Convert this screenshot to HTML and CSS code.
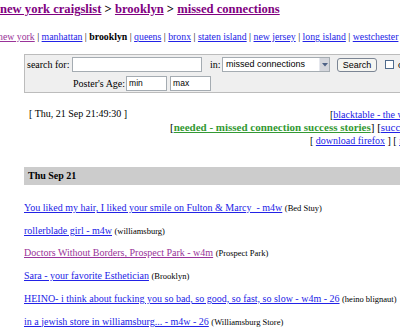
FILE: index.html
```html
<!DOCTYPE html>
<html>
  <head>
    <meta charset="utf-8">
    <title>missed connections</title>
    <link rel="stylesheet" href="styles.css">
  </head>
  <body>
    <h1 class="crumbs">
      <a href="#">new york craigslist</a> &gt; <a href="#">brooklyn</a> &gt; <a href="#">missed connections</a>
    </h1>

    <div class="nav">
      <a href="#" class="seen">new york</a> |
      <a href="#">manhattan</a> |
      <b>brooklyn</b> |
      <a href="#">queens</a> |
      <a href="#">bronx</a> |
      <a href="#">staten island</a> |
      <a href="#">new jersey</a> |
      <a href="#">long island</a> |
      <a href="#">westchester</a> |
      <a href="#">fairfield</a>
    </div>

    <form class="search">
      <div class="row">
        <span class="lbl">search for:</span>
        <span class="field wide"></span>
        <span class="in">in:</span>
        <span class="select">
          <span class="sel-text">missed connections</span>
          <span class="sel-btn">
            <svg width="6" height="4" viewBox="0 0 6 4"><path d="M0 0 L3 3.5 L6 0 Z" fill="#4d6185"/></svg>
          </span>
        </span>
        <span class="btn">Search</span>
        <span class="check"></span>
        <span class="only">only search titles</span>
      </div>
      <div class="row second">
        <span class="age">Poster's Age:</span>
        <span class="field small">min</span>
        <span class="field small">max</span>
      </div>
    </form>

    <div class="info">
      <div class="date">[ Thu, 21 Sep 21:49:30 ]</div>
      <div class="side">
        <div class="l1">[<a href="#">blacktable - the worst of craigslist</a>]</div>
        <div class="l2">[<a href="#" class="green">needed - missed connection success stories</a>] [<a href="#">success stories</a>]</div>
        <div class="l3">[ <a href="#">download firefox</a> ] [ <a href="#">rss</a> ]</div>
      </div>
    </div>

    <div class="day">Thu Sep 21</div>

    <div class="list">
      <p><a href="#">You liked my hair, I liked your smile on Fulton &amp; Marcy &nbsp;- m4w</a> <small>(Bed Stuy)</small></p>
      <p><a href="#">rollerblade girl - m4w</a> <small>(williamsburg)</small></p>
      <p><a href="#" class="seen">Doctors Without Borders, Prospect Park - w4m</a> <small>(Prospect Park)</small></p>
      <p><a href="#">Sara - your favorite Esthetician</a> <small>(Brooklyn)</small></p>
      <p><a href="#">HEINO- i think about fucking you so bad, so good, so fast, so slow - w4m - 26</a> <small>(heino blignaut)</small></p>
      <p><a href="#">in a jewish store in williamsburg... - m4w - 26</a> <small>(Williamsburg Store)</small></p>
    </div>
  </body>
</html>
```

FILE: styles.css
```css
html, body {
  overflow: hidden;
}
body {
  margin: 0;
  font-family: "Liberation Serif", "Times New Roman", serif;
  font-size: 10px;
  color: #000;
  background-color: #fff;
}
a {
  color: #2222e6;
}
a.seen {
  color: #993399;
}

.crumbs {
  font-size: 12.6px;
  line-height: 15px;
  margin: 2px 0 0 0;
  white-space: nowrap;
}
.crumbs a {
  color: #800080;
}

.nav {
  font-size: 9.8px;
  line-height: 12px;
  margin: 14px 0 0 -2px;
  white-space: nowrap;
}

.search {
  margin: 11px 0 0 24px;
  width: 520px;
  border: 1px solid #bcbcbc;
  background-color: #efefef;
  padding: 2px 3px 1px 2px;
}
.search .row {
  display: flex;
  align-items: center;
  height: 15px;
  white-space: nowrap;
}
.search .second {
  margin-top: 4px;
  padding-left: 46px;
}
.lbl {
  width: 45px;
}
.field {
  box-sizing: border-box;
  height: 15px;
  border: 1px solid #a5acb2;
  background-color: #fff;
  font-family: "Liberation Sans", Arial, sans-serif;
  font-size: 8.5px;
  line-height: 13px;
  padding-left: 2px;
}
.wide {
  width: 130px;
}
.small {
  width: 41px;
  margin-right: 3px;
}
.age {
  margin-right: 1px;
}
.in {
  margin-left: 8px;
  width: 12px;
}
.select {
  box-sizing: border-box;
  display: flex;
  width: 108px;
  height: 15px;
  border: 1px solid #a5acb2;
  background-color: #fff;
  font-family: "Liberation Sans", Arial, sans-serif;
  font-size: 9px;
}
.sel-text {
  flex: 1;
  line-height: 13px;
  padding-left: 3px;
}
.sel-btn {
  width: 9px;
  background-color: #d4d6dc;
  border-left: 1px solid #e6e8ee;
  display: flex;
  align-items: center;
  justify-content: center;
}
.btn {
  box-sizing: border-box;
  margin-left: 7px;
  width: 40px;
  height: 14px;
  border: 1px solid #7b8594;
  border-radius: 3px;
  background-color: #f5f5f1;
  font-family: "Liberation Sans", Arial, sans-serif;
  font-size: 9px;
  line-height: 12px;
  text-align: center;
}
.check {
  box-sizing: border-box;
  margin-left: 8px;
  width: 9px;
  height: 9px;
  border: 1px solid #4f6b8c;
  background-color: #fff;
}
.only {
  margin-left: 4px;
}

.info {
  display: flex;
  margin-top: 15px;
  white-space: nowrap;
}
.date {
  flex-shrink: 0;
  width: 141px;
  padding-left: 29px;
  line-height: 12px;
}
.side {
  flex-shrink: 0;
}
.side div {
  line-height: 13px;
}
.side .l1 {
  margin-left: 160px;
}
.side .l2 {
  font-size: 11px;
}
.side .l3 {
  margin-left: 140px;
}
a.green {
  color: #339933;
  font-weight: bold;
}

.day {
  margin: 20px 0 0 24px;
  width: 520px;
  height: 18px;
  line-height: 18px;
  padding-left: 4px;
  background-color: #cccccc;
  font-weight: bold;
}

.list {
  margin-top: 12px;
  padding-left: 24px;
  white-space: nowrap;
}
.list p {
  margin: 0;
  line-height: 22.7px;
}
.list small {
  font-size: 8.5px;
}
```
